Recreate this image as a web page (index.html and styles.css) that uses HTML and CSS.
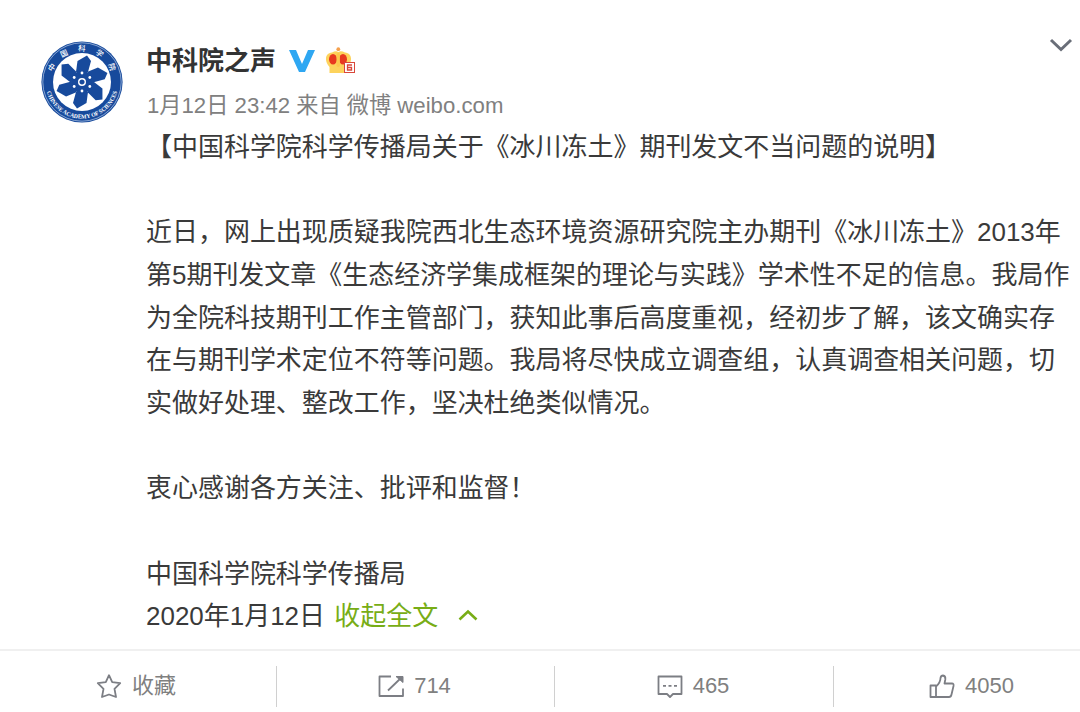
FILE: index.html
```html
<!DOCTYPE html>
<html lang="zh-CN">
<head>
<meta charset="utf-8">
<title>中科院之声</title>
<link rel="stylesheet" href="styles.css">
</head>
<body>
<article class="card">
  <div class="main">
    <svg class="avatar" viewBox="-41 -41 82 82">
      <defs>
        <path id="arc-top" d="M-30.1 4A30.400 30.400 0 1 1 30.1 4"/>
        <path id="arc-bottom" d="M-36.600 0A36.600 36.600 0 0 0 36.600 0"/>
        <path id="petal" d="M-6 -10L-4.500 -21L5 -26.500L9 -21L6 -10L0 -6Z"/>
      </defs>
      <circle r="40.600" fill="#174a9c"/>
      <circle r="39.200" fill="none" stroke="#b9cdea" stroke-width=".7"/>
      <circle r="29" fill="#fff"/>
      <g fill="#174a9c">
        <circle r="11"/>
        <use href="#petal"/>
        <use href="#petal" transform="rotate(60)"/>
        <use href="#petal" transform="rotate(120)"/>
        <use href="#petal" transform="rotate(180)"/>
        <use href="#petal" transform="rotate(240)"/>
        <use href="#petal" transform="rotate(300)"/>
      </g>
      <circle r="3.300" fill="none" stroke="#fff" stroke-width="1.400"/>
      <g fill="#fff">
        <circle cx="0" cy="-9" r="1.400"/><circle cx="7.800" cy="-4.500" r="1.400"/><circle cx="7.800" cy="4.500" r="1.400"/>
        <circle cx="0" cy="9" r="1.400"/><circle cx="-7.800" cy="4.500" r="1.400"/><circle cx="-7.800" cy="-4.500" r="1.400"/>
      </g>
      <text class="seal-cn"><textPath href="#arc-top" startOffset="54%">中国科学院</textPath></text>
      <text class="seal-en"><textPath href="#arc-bottom" startOffset="50%" textLength="95" lengthAdjust="spacingAndGlyphs">CHINESE ACADEMY OF SCIENCES</textPath></text>
    </svg>
    <div class="content">
      <header class="head">
        <span class="name">中科院之声</span>
        <svg class="verified" viewBox="0 0 26 23"><path d="M0 0H7L13 14L19 0H26L16 22H10Z" fill="#2ea7f2"/></svg>
        <svg class="crown" viewBox="0 0 31 28">
          <circle cx="13.300" cy="2.200" r="1.900" fill="#f5a04c"/>
          <path d="M4.500 26V20C-1 14 0 6 7 5.500Q11 3.500 13.300 5Q16 3.500 20 5.500C27 6 28 14 22.500 20V26Z" fill="#fdd35c"/>
          <ellipse cx="8" cy="12.300" rx="4" ry="5.300" fill="#e8391f"/>
          <ellipse cx="18" cy="12.300" rx="4" ry="5.300" fill="#e8391f"/>
          <rect x="11.500" y="6" width="3.400" height="14" rx="1.700" fill="#fcc84d"/>
          <rect x="19.500" y="15.500" width="10" height="10" fill="#fff" stroke="#d9483b"/>
          <path d="M27 18H22.500V23H26.500V20.500H22.500" fill="none" stroke="#d9483b" stroke-width="1.300"/>
        </svg>
        <svg class="more" viewBox="0 0 24 14"><path d="M2 2L12 11.500L22 2" fill="none" stroke="#696e78" stroke-width="3"/></svg>
      </header>
      <div class="meta">1月12日 23:42 来自 微博 weibo.com</div>
      <div class="text">
        <p>【中国科学院科学传播局关于《冰川冻土》期刊发文不当问题的说明】</p>
        <p class="gap">近日，网上出现质疑我院西北生态环境资源研究院主办期刊《冰川冻土》2013年<br>第5期刊发文章《生态经济学集成框架的理论与实践》学术性不足的信息。我局作<br>为全院科技期刊工作主管部门，获知此事后高度重视，经初步了解，该文确实存<br>在与期刊学术定位不符等问题。我局将尽快成立调查组，认真调查相关问题，切<br>实做好处理、整改工作，坚决杜绝类似情况。</p>
        <p class="gap">衷心感谢各方关注、批评和监督！</p>
        <p class="gap">中国科学院科学传播局<br>2020年1月12日 <a class="fold">收起全文<svg class="up" viewBox="0 0 20 12"><path d="M1.500 10.500L10 2.500L18.500 10.500" fill="none" stroke="#78ad16" stroke-width="2.600"/></svg></a></p>
      </div>
    </div>
  </div>
  <footer class="actions">
    <div class="action">
      <svg class="icon" viewBox="0 0 26 26"><path d="M13 2.200L16.200 9.200L24.200 10.200L18.500 15.800L20 24L13 21.500L6 24L7.500 15.800L1.800 10.200L9.800 9.200Z"/></svg>
      <span class="label">收藏</span>
    </div>
    <div class="action">
      <svg class="icon" viewBox="0 0 26 26"><path d="M13 3.500H1.500V23H25V15.500M10 17.500L24 4"/><path d="M18 3.500H25V9.500Z" class="tip"/></svg>
      <span>714</span>
    </div>
    <div class="action">
      <svg class="icon" viewBox="0 0 26 26"><path d="M1.500 3.500H24.500V21H16L13 24L10 21H1.500Z"/><path d="M6 12.800H9M11.500 12.800H14.500M17 12.800H20"/></svg>
      <span>465</span>
    </div>
    <div class="action">
      <svg class="icon" viewBox="0 0 26 26"><path d="M1.500 12.500H7V24H1.500ZM7 13.500C10.500 10.500 11.500 8.500 11.500 5Q12 2.500 14 2.500Q16.800 3 16.300 6.500L15.500 10.500H23Q25 10.500 24.500 13L22.500 21.500Q22 24 20 24H7"/></svg>
      <span>4050</span>
    </div>
  </footer>
</article>
</body>
</html>
```
FILE: styles.css
```css
* { box-sizing: border-box; }
body {
  margin: 0;
  background: #fff;
  color: #3a3a3a;
  font-family: "Liberation Sans", "Noto Sans CJK SC", sans-serif;
  overflow: hidden;
}
.card { width: 1080px; height: 712px; display: flex; flex-direction: column; overflow: hidden; }
.main { height: 649px; display: flex; gap: 23px; padding: 41px 0 0 41px; flex: none; }
.avatar { width: 82px; height: 82px; flex: none; }
.seal-cn { font: 500 7.5px "Noto Sans CJK SC", sans-serif; fill: #fff; text-anchor: middle; letter-spacing: 9.5px; }
.seal-en { font: 700 6px "Liberation Serif", serif; fill: #fff; text-anchor: middle; }
.content { flex: 1; min-width: 0; }
.head { display: flex; align-items: center; height: 40px; padding-right: 7px; }
.name { font-size: 26px; font-weight: 700; line-height: 40px; color: #333; }
.verified { width: 26px; height: 23px; margin-left: 13px; }
.crown { width: 31px; height: 28px; margin-left: 10px; }
.more { width: 24px; height: 14px; margin: -32px 0 0 auto; }
.meta { font-size: 22.2px; line-height: 42px; color: #808080; white-space: nowrap; padding: 1px 0 0 1px; margin: 3px 0 -1px; }
.text { font-size: 25.97px; line-height: 42.67px; white-space: nowrap; }
.text p { margin: 0; }
.text .gap { margin-top: 42.67px; }
.fold { color: #78ad16; margin-left: 2px; }
.up { width: 20px; height: 12px; margin-left: 20px; vertical-align: 4px; }
.actions {
  width: 1114px; height: 63px; flex: none; padding-right: 1px;
  display: grid; grid-template-columns: 277px 278px 279px 278px;
  border-top: 2px solid #f0f0f0;
  color: #808080; font-size: 22px;
}
.action {
  display: flex; justify-content: center; align-items: center; gap: 10px;
  height: 41px; margin-top: 15px; padding: 0 2px 2px 0; border-right: 1px solid #d0d0d0;
}
.action:first-child { padding-right: 4px; }
.label { line-height: 30px; }
.icon { width: 26px; height: 26px; fill: none; stroke: #7c7e84; stroke-width: 1.8; stroke-linejoin: round; }
.tip { fill: #7c7e84; stroke-width: 1; }
```
